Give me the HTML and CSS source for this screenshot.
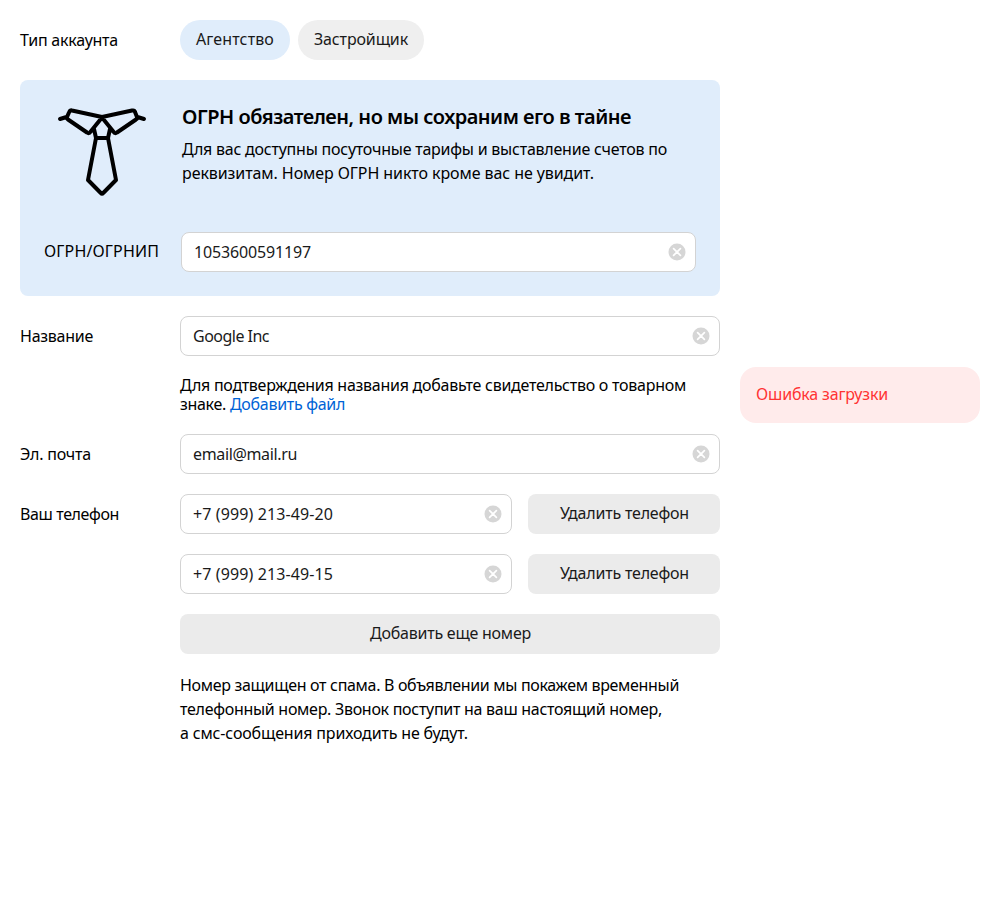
FILE: index.html
```html
<!DOCTYPE html>
<html lang="ru">
<head>
<meta charset="utf-8">
<title>Настройки аккаунта</title>
<link rel="stylesheet" href="styles.css">
</head>
<body>
<svg class="defs" width="0" height="0"><symbol id="clear" viewBox="0 0 18 18"><circle cx="9" cy="9" r="8.5" fill="#d6d6d6"/><path d="M5.6 5.6l6.8 6.8M12.4 5.6l-6.8 6.8" stroke="#fff" stroke-width="1.7" stroke-linecap="round"/></symbol></svg>
<div class="page">
<main class="form">
  <div class="row">
    <div class="label"><span class="t" data-w="98">Тип аккаунта</span></div>
    <div class="tags"><div class="tag tag-active"><span class="t" data-w="78">Агентство</span></div><div class="tag"><span class="t" data-w="94">Застройщик</span></div></div>
  </div>
  <section class="card">
    <div class="card-top">
      <svg class="tie" viewBox="0 0 88 88" fill="none" stroke="#000" stroke-width="4" stroke-linecap="round" stroke-linejoin="round"><path d="M2 11l6.5-2M86 11l-6.500-2M44 9L14 2.500Q12 2 11.200 4L9 9Q8.500 10.500 10 11.500L29 24.500Q31 26 32.300 24L44 9.500L55.700 24Q57 26 59 24.500L78 11.500Q80 10.500 79 9L77 4Q76.500 2 74 2.500L44 9M36 21l2 9h12l2-9M38 30L30 72L42.800 85Q44 86.500 45.200 85L58 72L50 30"/></svg>
      <div><h2><span class="t" data-w="449">ОГРН обязателен, но мы сохраним его в тайне</span></h2>
      <p class="lines"><span class="t" data-w="485">Для вас доступны посуточные тарифы и выставление счетов по</span><br><span class="t" data-w="412">реквизитам. Номер ОГРН никто кроме вас не увидит.</span></p></div>
    </div>
    <div class="card-row"><div class="card-label"><span class="t" data-w="115">ОГРН/ОГРНИП</span></div><div class="input"><span class="t" data-w="117">1053600591197</span><svg class="clear"><use href="#clear"/></svg></div></div>
  </section>
  <div class="row"><div class="label"><span class="t" data-w="73">Название</span></div><div class="input"><span class="t" data-w="76">Google Inc</span><svg class="clear"><use href="#clear"/></svg></div></div>
  <div class="note"><span class="t" data-w="506">Для подтверждения названия добавьте свидетельство о товарном</span><div class="note-end"><span class="t" data-w="46">знаке.</span><a class="t" data-w="115">Добавить файл</a></div></div>
  <div class="row"><div class="label"><span class="t" data-w="71">Эл. почта</span></div><div class="input"><span class="t" data-w="104">email@mail.ru</span><svg class="clear"><use href="#clear"/></svg></div></div>
  <div class="row"><div class="label"><span class="t" data-w="99">Ваш телефон</span></div><div class="input"><span class="t" data-w="140">+7 (999) 213-49-20</span><svg class="clear"><use href="#clear"/></svg></div><div class="button remove"><span class="t" data-w="129">Удалить телефон</span></div></div>
  <div class="row"><div class="label"></div><div class="input"><span class="t" data-w="140">+7 (999) 213-49-15</span><svg class="clear"><use href="#clear"/></svg></div><div class="button remove"><span class="t" data-w="129">Удалить телефон</span></div></div>
  <div class="button add"><span class="t" data-w="161">Добавить еще номер</span></div>
  <p class="help lines"><span class="t" data-w="499">Номер защищен от спама. В объявлении мы покажем временный</span><br><span class="t" data-w="482">телефонный номер. Звонок поступит на ваш настоящий номер,</span><br><span class="t" data-w="288">а смс-сообщения приходить не будут.</span></p>
</main>
<aside class="error"><span class="t" data-w="132">Ошибка загрузки</span></aside>
</div>
<script src="fit.js"></script>
</body>
</html>
```
FILE: styles.css
```css
* { box-sizing: border-box; }
body { margin: 0; background: #fff; color: #000; font: 16px/20px "Noto Sans", sans-serif; }
h2, p { margin: 0; }
a { color: #0063d6; }
.defs { display: block; height: 0; }
.page { display: flex; gap: 20px; padding: 20px; align-items: flex-start; }
.form { width: 700px; display: flex; flex-direction: column; gap: 20px; }
.row { display: flex; align-items: center; height: 40px; }
.label { width: 160px; flex: none; }
.t { white-space: nowrap; }
.tags { display: flex; gap: 8px; }
.tag { height: 40px; border-radius: 20px; padding: 0 16px; line-height: 38px; background: #efefef; color: #1a1a1a; }
.tag-active { background: #e0edfb; }
.card { height: 216px; padding: 24px; border-radius: 8px; background: #e0edfb; }
.card-top { display: flex; height: 128px; padding-left: 14px; }
.tie { width: 88px; height: 88px; margin: 4px 36px 0 0; flex: none; overflow: visible; }
h2 { font-size: 20px; line-height: 26px; font-weight: 600; }
.lines { line-height: 24px; white-space: nowrap; }
.card .lines { margin-top: 7px; }
.card-row { display: flex; }
.card-label { width: 137px; line-height: 38px; flex: none; }
.input { flex: 1; height: 40px; border: 1px solid #d3d3d3; border-radius: 8px; background: #fff; color: #1a1a1a; padding: 0 9px 0 12px; display: flex; align-items: center; justify-content: space-between; }
.clear { width: 18px; height: 18px; }
.note { padding-left: 160px; line-height: 19px; height: 38px; }
.note-end { display: flex; gap: 4px; }
.button { height: 40px; border-radius: 8px; background: #ebebeb; color: #1a1a1a; text-align: center; line-height: 38px; padding-left: 1px; }
.remove { width: 192px; margin-left: 16px; }
.add { margin-left: 160px; }
.help { padding-left: 160px; margin-top: -1px; }
.error { width: 240px; height: 56px; margin-top: 347px; padding: 0 16px; line-height: 55px; border-radius: 16px; background: #ffebeb; color: #ff3333; }
```
FILE: fit.js
```js
// Adjusts the tracking of each label so its line has the intended measure.
document.querySelectorAll('.t').forEach(function (el) {
  var range = document.createRange();
  range.selectNodeContents(el);
  var w = range.getBoundingClientRect().width;
  el.style.letterSpacing = (el.dataset.w - w) / el.textContent.length + 'px';
});
```
